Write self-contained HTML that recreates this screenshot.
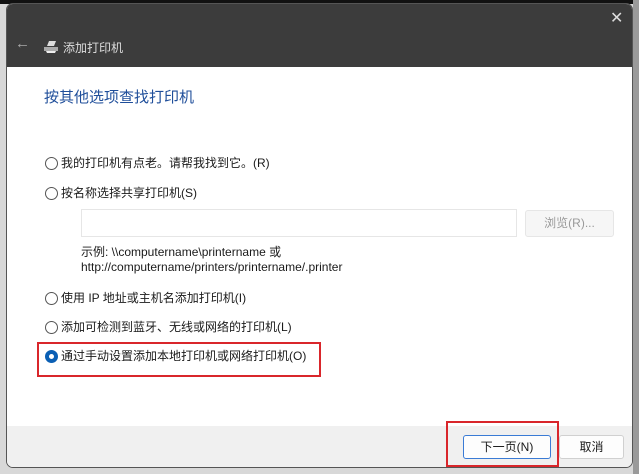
<!DOCTYPE html>
<html><head><meta charset="utf-8"><style>
*{margin:0;padding:0;box-sizing:border-box}
body{width:639px;height:474px;overflow:hidden;background:#d8d8d8;position:relative;font-family:"Liberation Sans","Noto Sans CJK SC",sans-serif;font-size:12px;color:#1a1a1a}
.top{position:absolute;left:0;top:0;width:639px;height:4px;background:#111}
.rside{position:absolute;left:633px;top:0;width:6px;height:474px;background:#9a9a9a}
.win{position:absolute;left:6px;top:3px;width:627px;height:465px;background:#fff;border:1px solid #555;border-radius:7px;overflow:hidden}
.hdr{position:absolute;left:0;top:0;width:100%;height:63px;background:#3c3c3c}
.foot{position:absolute;left:0;top:422px;width:100%;height:43px;background:#f0f0f0}
.t{position:absolute;white-space:nowrap}
.rad{position:absolute;width:13px;height:13px;border:1px solid #555;border-radius:50%;background:#fff}
.rad.on{border:4px solid #0a5fb4}
.btn{position:absolute;height:24px;background:#fdfdfd;border:1px solid #d0d0d0;border-radius:3px;text-align:center;line-height:22px;font-size:12px}
.red{position:absolute;border:2px solid #d9262b}
</style></head><body>
<div class="top"></div><div class="rside"></div>
<div class="win">
 <div class="hdr">
  <div class="t" style="left:8px;top:31px;color:#aaa;font-size:15px">&#8592;</div>
  <svg style="position:absolute;left:36px;top:36px" width="16" height="14" viewBox="0 0 16 14"><path d="M6 1h7l-2 5H4z" fill="#ddd"/><path d="M1 7h14v4H1z" fill="#aaa"/><path d="M3 11h10l-1 2H4z" fill="#eee"/></svg>
  <div class="t" style="left:56px;top:35px;color:#ddd;font-size:12px">添加打印机</div>
  <div class="t" style="left:603px;top:4px;color:#ddd;font-size:16px">&#x2715;</div>
 </div>
 <div class="t" style="left:37px;top:82px;color:#1f4e9a;font-size:15px">按其他选项查找打印机</div>
 <div class="rad" style="left:38px;top:153px"></div><div class="t" style="left:54px;top:150px">我的打印机有点老。请帮我找到它。(R)</div>
 <div class="rad" style="left:38px;top:183px"></div><div class="t" style="left:54px;top:180px">按名称选择共享打印机(S)</div>
 <div style="position:absolute;left:74px;top:205px;width:436px;height:28px;border:1px solid #e6e6e6;background:#fff"></div>
 <div class="btn" style="left:518px;top:206px;width:89px;height:27px;line-height:25px;color:#999;background:#f6f6f6;border-color:#e6e6e6">浏览(R)...</div>
 <div class="t" style="left:74px;top:239px">示例: \\computername\printername 或</div>
 <div class="t" style="left:74px;top:256px">http://computername/printers/printername/.printer</div>
 <div class="rad" style="left:38px;top:288px"></div><div class="t" style="left:54px;top:285px">使用 IP 地址或主机名添加打印机(I)</div>
 <div class="rad" style="left:38px;top:317px"></div><div class="t" style="left:54px;top:314px">添加可检测到蓝牙、无线或网络的打印机(L)</div>
 <div class="rad on" style="left:38px;top:346px"></div><div class="t" style="left:54px;top:343px">通过手动设置添加本地打印机或网络打印机(O)</div>
 <div class="red" style="left:30px;top:338px;width:284px;height:35px"></div>
 <div class="foot">
  <div class="btn" style="left:456px;top:9px;width:88px;border-color:#3a7bd5">下一页(N)</div>
  <div class="btn" style="left:552px;top:9px;width:65px">取消</div>
 </div>
 <div class="red" style="left:439px;top:417px;width:113px;height:46px"></div>
</div>
</body></html>
